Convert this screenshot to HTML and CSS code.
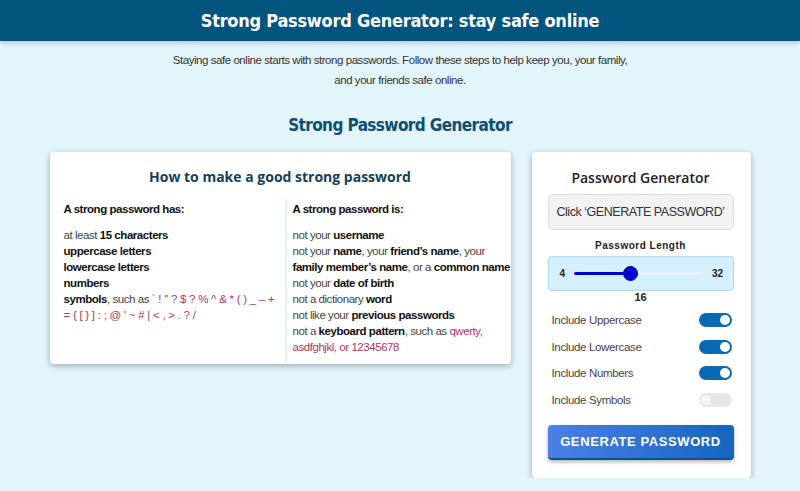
FILE: index.html
```html
<!DOCTYPE html>
<html lang="en">
<head>
    <meta charset="UTF-8">
    <meta name="viewport" content="width=device-width, initial-scale=1.0">
    <title>Strong Password Generator</title>
    <link rel="stylesheet" href="styles.css">
</head>
<body>
    <header class="top-bar">
        <h1>Strong Password Generator: stay safe online</h1>
    </header>

    <p class="intro">Staying safe online starts with strong passwords. Follow these steps to help keep you, your family, and your friends safe online.</p>

    <h2 class="page-title">Strong Password Generator</h2>

    <div class="container">
        <div class="tips-card">
            <h3 class="card-title">How to make a good strong password</h3>
            <div class="tips-columns">
                <div class="tips-col">
                    <p class="col-heading">A strong password has:</p>
                    <ul class="tips-list">
                        <li>at least <b>15 characters</b></li>
                        <li><b>uppercase letters</b></li>
                        <li><b>lowercase letters</b></li>
                        <li><b>numbers</b></li>
                        <li><b>symbols</b>, such as <span class="sample symbols">` ! " ? $ ? % ^ &amp; * ( ) _ &#8211; + = { [ } ] : ; @ ' ~ # | &lt; , &gt; . ? /</span></li>
                    </ul>
                </div>
                <div class="tips-col tips-col-right">
                    <p class="col-heading">A strong password is:</p>
                    <ul class="tips-list">
                        <li>not your <b>username</b></li>
                        <li class="nowrap">not your <b>name</b>, your <b>friend’s name</b>, your<br><b>family member’s name</b>, or a <b>common name</b></li>
                        <li>not your <b>date of birth</b></li>
                        <li>not a dictionary <b>word</b></li>
                        <li>not like your <b>previous passwords</b></li>
                        <li>not a <b>keyboard pattern</b>, such as <span class="sample">qwerty, asdfghjkl, or 12345678</span></li>
                    </ul>
                </div>
            </div>
        </div>

        <div class="generator-card">
            <h3 class="gen-title">Password Generator</h3>
            <div class="output-box">Click ‘GENERATE PASSWORD’</div>

            <p class="length-label">Password Length</p>
            <div class="slider-box">
                <span class="range-end">4</span>
                <input type="range" class="length-range" min="4" max="32" value="16">
                <span class="range-end">32</span>
            </div>
            <p class="length-value">16</p>

            <div class="options">
                <div class="option-row">
                    <span>Include Uppercase</span>
                    <span class="switch on"></span>
                </div>
                <div class="option-row">
                    <span>Include Lowercase</span>
                    <span class="switch on"></span>
                </div>
                <div class="option-row">
                    <span>Include Numbers</span>
                    <span class="switch on"></span>
                </div>
                <div class="option-row">
                    <span>Include Symbols</span>
                    <span class="switch"></span>
                </div>
            </div>

            <button class="generate-btn">GENERATE PASSWORD</button>
        </div>
    </div>
</body>
</html>
```

FILE: styles.css
```css
* {
    margin: 0;
    padding: 0;
    box-sizing: border-box;
}

body {
    font-family: "Liberation Sans", Arial, sans-serif;
    background-color: #e3f4fb;
    color: #333;
}

.top-bar {
    background: #03547e;
    height: 41px;
    display: flex;
    align-items: center;
    justify-content: center;
    box-shadow: 0 2px 5px rgba(0, 60, 100, 0.25);
}

.top-bar h1 {
    font-family: "DejaVu Sans Condensed", "DejaVu Sans", sans-serif;
    font-stretch: condensed;
    font-size: 18px;
    font-weight: 700;
    letter-spacing: -0.25px;
    color: #fff;
}

.intro {
    max-width: 470px;
    margin: 9px auto 0;
    font-size: 11.5px;
    letter-spacing: -0.45px;
    line-height: 20px;
    text-align: center;
    color: #333;
}

.page-title {
    font-family: "DejaVu Sans Condensed", "DejaVu Sans", sans-serif;
    font-stretch: condensed;
    font-size: 17px;
    font-weight: 700;
    letter-spacing: -0.6px;
    line-height: 24px;
    color: #0d4f73;
    text-align: center;
    margin-top: 23px;
}

.container {
    display: flex;
    align-items: flex-start;
    gap: 21px;
    width: 701px;
    margin: 15px auto 0;
}

.tips-card, .generator-card {
    background: white;
    border-radius: 4px;
    box-shadow: 0 2px 6px rgba(0, 0, 0, 0.3);
}

.tips-card {
    width: 461px;
    padding: 15px 0 0 14px;
}

.card-title {
    font-family: "Open Sans", sans-serif;
    font-size: 14px;
    font-weight: 700;
    line-height: 20px;
    color: #163e5c;
    text-align: center;
    padding-right: 14px;
}

.tips-columns {
    display: flex;
    margin-top: 12px;
}

.tips-col {
    width: 221px;
    padding: 0 6px 9px 0;
    font-size: 11.5px;
    letter-spacing: -0.45px;
    line-height: 16px;
}

.tips-col-right {
    flex: 1;
    border-left: 2px solid #e3f2f9;
    padding: 0 0 9px 6px;
}

.col-heading {
    font-weight: 700;
    color: #111;
    margin: 2px 0 10px;
}

.tips-list {
    list-style: none;
    color: #444;
}

.tips-list b {
    color: #111;
}

.nowrap {
    white-space: nowrap;
}

.sample {
    color: #b0375a;
}

.symbols {
    word-spacing: 0.4px;
}

.generator-card {
    width: 219px;
    padding: 16px 17px 18px 16px;
}

.gen-title {
    font-family: "Open Sans", sans-serif;
    font-size: 14px;
    font-weight: 600;
    line-height: 20px;
    color: #222;
    text-align: center;
}

.output-box {
    margin-top: 6px;
    height: 36px;
    display: flex;
    align-items: center;
    justify-content: center;
    background: #f2f2f2;
    border: 1px solid #dcdcdc;
    border-radius: 5px;
    font-size: 12.5px;
    letter-spacing: -0.45px;
    white-space: nowrap;
    color: #333;
}

.length-label {
    margin-top: 10px;
    font-size: 10px;
    font-weight: 700;
    line-height: 12px;
    letter-spacing: 0.5px;
    text-align: center;
    color: #222;
}

.slider-box {
    margin-top: 4px;
    height: 35px;
    display: flex;
    align-items: center;
    gap: 6px;
    padding: 0 10px 0 11px;
    background: #d6effc;
    border: 1px solid #a8dcf3;
    border-radius: 4px;
}

.range-end {
    font-size: 10px;
    font-weight: 700;
    color: #222;
}

.length-range {
    -webkit-appearance: none;
    appearance: none;
    flex: 1;
    height: 3px;
    margin: 0 3px;
    border-radius: 2px;
    background: linear-gradient(to right, #0000c8 43%, #e4f3fb 43%);
    outline: none;
}

.length-range::-webkit-slider-thumb {
    -webkit-appearance: none;
    width: 15px;
    height: 15px;
    border-radius: 50%;
    background: #0000d4;
    border: 1px solid #0000a0;
    cursor: pointer;
}

.length-value {
    font-size: 11px;
    font-weight: 700;
    line-height: 12px;
    text-align: center;
    color: #222;
}

.options {
    margin-top: 4px;
}

.option-row {
    height: 26.5px;
    display: flex;
    align-items: center;
    justify-content: space-between;
    padding: 0 2px 0 4px;
    font-size: 11.5px;
    letter-spacing: -0.35px;
    color: #444;
}

.switch {
    position: relative;
    width: 33px;
    height: 14px;
    border-radius: 7px;
    background: #e6e6e6;
}

.switch::after {
    content: "";
    position: absolute;
    top: 2px;
    left: 2px;
    width: 10px;
    height: 10px;
    border-radius: 50%;
    background: #f6f6f6;
}

.switch.on {
    background: #0b69b3;
}

.switch.on::after {
    left: auto;
    right: 2px;
    background: #fff;
}

.generate-btn {
    display: block;
    width: 100%;
    height: 35px;
    margin-top: 12px;
    border: none;
    border-bottom: 2px solid #0b4f97;
    border-radius: 4px;
    background: linear-gradient(to right, #4c80e2, #1466bf);
    box-shadow: 0 2px 4px rgba(0, 0, 0, 0.3);
    color: white;
    font-family: "Liberation Sans", Arial, sans-serif;
    font-size: 13px;
    font-weight: 700;
    letter-spacing: 0.6px;
    cursor: pointer;
}
```
